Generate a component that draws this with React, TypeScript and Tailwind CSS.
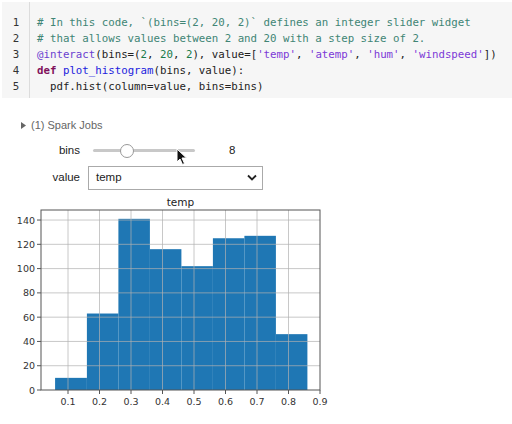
import React from "react";

const mono = { fontFamily: '"DejaVu Sans Mono", "Liberation Mono", monospace' };

const C = ({ c, children }: { c: string; children: React.ReactNode }) => (
  <span className={c}>{children}</span>
);

const codeLines: React.ReactNode[] = [
  <C c="text-[#408575]">{"# In this code, `(bins=(2, 20, 2)` defines an integer slider widget"}</C>,
  <C c="text-[#408575]">{"# that allows values between 2 and 20 with a step size of 2."}</C>,
  <>
    <C c="text-[#6a3fd0]">@interact</C>
    {"(bins=("}
    <C c="text-[#1a7a4a]">2</C>, <C c="text-[#1a7a4a]">20</C>, <C c="text-[#1a7a4a]">2</C>
    {"), value=["}
    <C c="text-[#7c3ad6]">'temp'</C>, <C c="text-[#7c3ad6]">'atemp'</C>, <C c="text-[#7c3ad6]">'hum'</C>,{" "}
    <C c="text-[#7c3ad6]">'windspeed'</C>
    {"])"}
  </>,
  <>
    <C c="text-[#80105a] font-bold">def</C> <C c="text-[#2222dd]">plot_histogram</C>
    {"(bins, value):"}
  </>,
  <>{"  pdf.hist(column=value, bins=bins)"}</>,
];

const bars = [
  { x0: 0.059, x1: 0.16, h: 10 },
  { x0: 0.16, x1: 0.26, h: 63 },
  { x0: 0.26, x1: 0.36, h: 141 },
  { x0: 0.36, x1: 0.46, h: 116 },
  { x0: 0.46, x1: 0.56, h: 102 },
  { x0: 0.56, x1: 0.66, h: 125 },
  { x0: 0.66, x1: 0.76, h: 127 },
  { x0: 0.76, x1: 0.86, h: 46 },
];

const px = (v: number) => 68 + (v - 0.1) * 315;
const py = (n: number) => 391 - n * 1.214;

function Histogram() {
  const xt = [0.1, 0.2, 0.3, 0.4, 0.5, 0.6, 0.7, 0.8, 0.9];
  const yt = [0, 20, 40, 60, 80, 100, 120, 140];
  const font = { fontFamily: '"DejaVu Sans", sans-serif' };
  return (
    <svg width="512" height="225" viewBox="0 195 512 225" className="block">
      {bars.map((b, i) => (
        <rect key={i} x={px(b.x0)} y={py(b.h)} width={px(b.x1) - px(b.x0)} height={391 - py(b.h)} fill="#1f77b4" />
      ))}
      {xt.slice(0, 8).map((t) => (
        <line key={t} x1={px(t)} x2={px(t)} y1={211} y2={391} stroke="#b0b0b0" strokeOpacity="0.7" strokeWidth="1" />
      ))}
      {yt.slice(1).map((t) => (
        <line key={t} x1={41} x2={320} y1={py(t)} y2={py(t)} stroke="#b0b0b0" strokeOpacity="0.7" strokeWidth="1" />
      ))}
      <rect x={41} y={211} width={279} height={180} fill="none" stroke="#555" strokeWidth="1" />
      {xt.map((t) => (
        <g key={t}>
          <line x1={px(t)} x2={px(t)} y1={391} y2={395} stroke="#555" />
          <text x={px(t)} y={406} fontSize="9.5" fill="#333" textAnchor="middle" style={font}>
            {t.toFixed(1)}
          </text>
        </g>
      ))}
      {yt.map((t) => (
        <g key={t}>
          <line x1={37} x2={41} y1={py(t)} y2={py(t)} stroke="#555" />
          <text x={35} y={py(t) + 3.5} fontSize="9.5" fill="#333" textAnchor="end" style={font}>
            {t}
          </text>
        </g>
      ))}
      <text x={180.5} y={207} fontSize="10.5" fill="#222" textAnchor="middle" style={font}>
        temp
      </text>
    </svg>
  );
}

export default function App() {
  const sans = { fontFamily: '"Liberation Sans", Arial, sans-serif' };
  return (
    <div className="relative w-[512px] h-[424px] bg-white overflow-hidden">
      <div className="mt-[2px] ml-[2px] h-[96px] bg-[#f6f6f6] flex">
        <div
          className="w-[28px] border-r border-[#dcdcdc] pt-[13px] flex flex-col items-center text-[10.75px] leading-[16px] text-[#333]"
          style={mono}
        >
          {[1, 2, 3, 4, 5].map((n) => (
            <div key={n} className="pl-[1px]">{n}</div>
          ))}
        </div>
        <div className="pl-[7px] pt-[13px] text-[10.75px] leading-[16px] text-[#222] whitespace-pre" style={mono}>
          {codeLines.map((l, i) => (
            <div key={i}>{l}</div>
          ))}
        </div>
      </div>

      <div className="mt-[19px] ml-[21px] flex items-center gap-[5px] text-[11px] text-[#666]" style={sans}>
        <svg width="5" height="7" viewBox="0 0 5 7">
          <path d="M0 0 L5 3.5 L0 7 Z" fill="#666" />
        </svg>
        <span>(1) Spark Jobs</span>
      </div>

      <div className="mt-[9px] flex items-center h-[16px] text-[11.5px] text-[#222]" style={sans}>
        <div className="w-[80px] text-right">bins</div>
        <div className="relative ml-[13px] w-[102px] h-[16px] flex items-center">
          <div className="w-full h-[3px] bg-[#c8c8c8] rounded-full" />
          <div className="absolute left-[27px] top-[1px] w-[14px] h-[14px] rounded-full bg-white border border-[#999]" />
        </div>
        <div className="ml-[34px]">8</div>
      </div>

      <div className="mt-[7px] flex items-center text-[11.5px] text-[#222]" style={sans}>
        <div className="w-[80px] text-right">value</div>
        <div className="ml-[8px] w-[175px] h-[24px] border border-[#aaa] bg-white flex items-center justify-between pl-[7px] pr-[5px]">
          <span>temp</span>
          <svg width="10" height="7" viewBox="0 0 10 7">
            <path d="M1 1.5 L5 5.5 L9 1.5" fill="none" stroke="#222" strokeWidth="1.8" />
          </svg>
        </div>
      </div>

      <div className="mt-[4px]">
        <Histogram />
      </div>

      <svg className="absolute left-[176px] top-[148px]" width="12" height="18" viewBox="0 0 12 18">
        <path d="M1 1 L1 14 L4 11 L6.5 16.5 L8.5 15.5 L6 10 L10.5 10 Z" fill="#111" stroke="#fff" strokeWidth="1" />
      </svg>
    </div>
  );
}
